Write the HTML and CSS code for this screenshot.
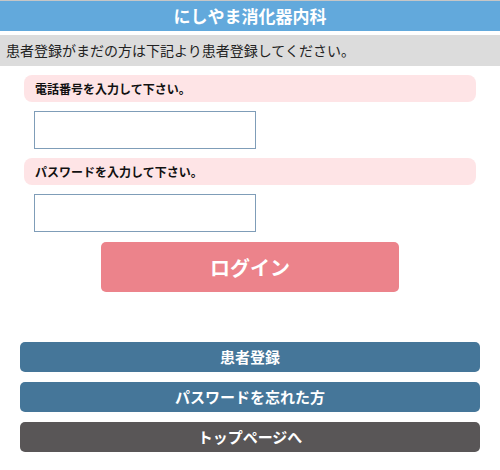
FILE: index.html
```html
<!DOCTYPE html>
<html lang="ja">
<head>
<meta charset="utf-8">
<title>にしやま消化器内科</title>
<link rel="stylesheet" href="styles.css">
</head>
<body>
<header class="site-header">にしやま消化器内科</header>
<div class="notice">患者登録がまだの方は下記より患者登録してください。</div>
<form class="login-form">
  <div class="field-label">電話番号を入力して下さい。</div>
  <input class="field-input" type="text">
  <div class="field-label">パスワードを入力して下さい。</div>
  <input class="field-input" type="password">
  <button class="login-btn" type="button">ログイン</button>
</form>
<nav class="links">
  <a class="link-btn blue">患者登録</a>
  <a class="link-btn blue">パスワードを忘れた方</a>
  <a class="link-btn dark">トップページへ</a>
</nav>
</body>
</html>
```
FILE: styles.css
```css
html, body {
  margin: 0;
  padding: 0;
  background: #fff;
}
body {
  font-family: "Noto Sans CJK JP", "Noto Sans", sans-serif;
  border-top: 1px solid #c6c6c6;
}
.site-header {
  height: 30px;
  background: #62a9dc;
  color: #fff;
  font-weight: bold;
  font-size: 17px;
  line-height: 30px;
  text-align: center;
}
.notice {
  margin-top: 4px;
  height: 31px;
  line-height: 31px;
  background: #dcdcdc;
  color: #222;
  font-size: 14px;
  padding-left: 6px;
}
.login-form {
  display: flex;
  flex-direction: column;
  align-items: flex-start;
  padding: 0 24px;
}
.field-label {
  align-self: stretch;
  margin-top: 9px;
  height: 27px;
  line-height: 27px;
  background: #fee4e6;
  border-radius: 8px;
  padding-left: 11px;
  font-size: 12px;
  font-weight: bold;
  color: #111;
}
.field-input {
  box-sizing: border-box;
  margin: 9px 0 0 10px;
  width: 222px;
  height: 38px;
  border: 1px solid #7f9db8;
  border-radius: 0;
  background: #fff;
  padding: 0 4px;
  outline: none;
}
.login-btn {
  align-self: center;
  margin-top: 10px;
  width: 298px;
  height: 50px;
  border: none;
  border-radius: 5px;
  background: #ec838b;
  color: #fff;
  font-family: inherit;
  font-weight: bold;
  font-size: 20px;
  padding: 0;
}
.links {
  display: flex;
  flex-direction: column;
  gap: 10px;
  margin: 50px 20px 0;
}
.link-btn {
  display: block;
  height: 30px;
  line-height: 30px;
  border-radius: 5px;
  text-align: center;
  color: #fff;
  font-weight: bold;
  font-size: 15px;
}
.link-btn.blue {
  background: #457699;
}
.link-btn.dark {
  background: #595657;
}
```
